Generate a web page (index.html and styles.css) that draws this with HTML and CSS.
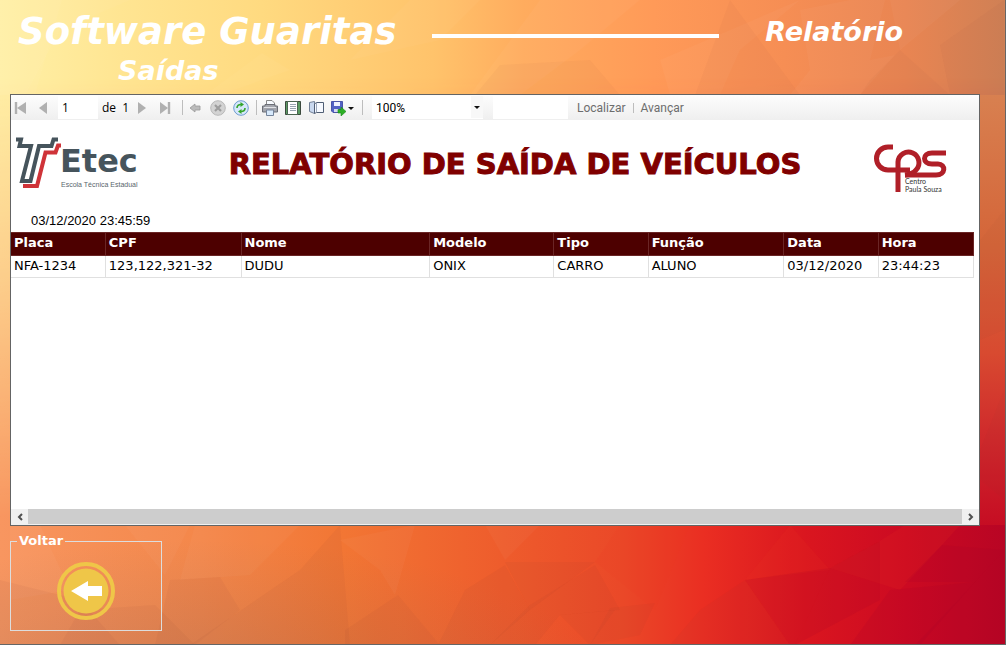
FILE: index.html
```html
<!DOCTYPE html>
<html lang="pt-BR">
<head>
<meta charset="utf-8">
<title>Software Guaritas - Relatório de Saídas</title>
<link rel="stylesheet" href="styles.css">
</head>
<body>
<svg class="backdrop" viewBox="0 0 1006 645" preserveAspectRatio="none" aria-hidden="true">
  <defs>
    <linearGradient id="top"><stop offset="0" stop-color="#fff0a6"/><stop offset=".12" stop-color="#ffe592"/><stop offset=".26" stop-color="#ffda80"/><stop offset=".43" stop-color="#ffc36b"/><stop offset=".52" stop-color="#ffac5e"/><stop offset=".65" stop-color="#ff9a58"/><stop offset=".78" stop-color="#f68e54"/><stop offset=".9" stop-color="#e98552"/><stop offset="1" stop-color="#cf8055"/></linearGradient>
    <linearGradient id="bottom"><stop offset="0" stop-color="#f89660"/><stop offset=".2" stop-color="#f4874a"/><stop offset=".34" stop-color="#f27634"/><stop offset=".5" stop-color="#ee5c2c"/><stop offset=".62" stop-color="#ea4828"/><stop offset=".7" stop-color="#ea2e22"/><stop offset=".8" stop-color="#da161f"/><stop offset=".9" stop-color="#cc0a22"/><stop offset="1" stop-color="#b80524"/></linearGradient>
    <linearGradient id="side" x2="0" y2="1"><stop offset="0" stop-color="#d88050"/><stop offset=".36" stop-color="#d46438"/><stop offset=".6" stop-color="#d84a30"/><stop offset=".78" stop-color="#d02c2c"/><stop offset="1" stop-color="#c60d23"/></linearGradient>
    <linearGradient id="fade" x2="0" y2="1"><stop offset=".12" stop-color="#000"/><stop offset=".45" stop-color="#666"/><stop offset=".8" stop-color="#fff"/></linearGradient>
    <radialGradient id="shade" gradientUnits="userSpaceOnUse" cx="0" cy="0" r="1" gradientTransform="translate(200 700) scale(420 160)"><stop offset="0" stop-color="#8a6a60" stop-opacity=".3"/><stop offset="1" stop-color="#8a6a60" stop-opacity="0"/></radialGradient>
    <mask id="lower"><rect width="1006" height="645" fill="url(#fade)"/></mask>
  </defs>
  <rect width="1006" height="645" fill="url(#top)"/>
  <rect width="1006" height="645" fill="url(#bottom)" mask="url(#lower)"/>
  <rect x="970" y="95" width="36" height="430" fill="url(#side)"/>
  <rect width="1006" height="645" fill="url(#shade)"/>
  <g fill="#fff" fill-opacity=".03">
    <path d="M0 0H62L35 95H0Z"/><path d="M0 0H130L60 30 25 95H0Z"/><path d="M262 53L290 70 220 95H205Z"/><path d="M410 0H480L440 40 350 60Z"/><path d="M540 0H640L580 50 520 95H470Z"/><path d="M660 60L800 0 740 50 720 95H670Z"/><path d="M850 0H885L870 60 895 55 860 95H790L810 70 800 10Z"/><path d="M890 0H960L900 50Z"/>
    <path d="M40 525L70 590 10 600V525Z"/><path d="M125 525H190L165 575Z"/><path d="M195 525H300L250 575 180 580Z"/><path d="M340 540L415 525 395 595 380 570Z"/><path d="M485 525H540L505 560Z"/>
  </g>
  <g fill="#f03a20" fill-opacity=".12">
    <path d="M595 562L620 525H690L655 610Z"/><path d="M745 580L790 525 830 570Z"/><path d="M830 568L880 541 905 525H960L942 545 900 590Z"/>
  </g>
  <g fill="#7c3030" fill-opacity=".035">
    <path d="M475 95L500 65 590 60 620 95Z"/><path d="M695 95L730 0 800 95Z"/><path d="M870 80L900 50 950 95H860Z"/><path d="M940 45L1004 0V95H950Z"/><path d="M980 240L1004 210V330L980 340Z"/><path d="M980 450L1004 390V500L980 480Z"/>
  </g>
  <g fill="#7c3030" fill-opacity=".055">
    <path d="M0 580L80 600 120 645H0Z"/><path d="M80 610L155 605 195 645H60Z"/><path d="M170 580L220 577 240 610 195 645H155Z"/><path d="M300 570L340 525 350 645H190Z"/><path d="M345 630L398 595 440 645H345Z"/><path d="M465 590L505 565 530 610 490 645H438Z"/><path d="M505 562H595L530 610Z"/><path d="M530 605L595 565 620 610 560 615 535 645H490Z"/><path d="M560 615L615 610 590 645Z"/><path d="M610 608L655 603 640 635 590 645Z"/><path d="M700 610L745 580 790 645H670Z"/>
  </g>
  <g fill="#a00028" fill-opacity=".14">
    <path d="M745 580L830 568 795 645H790Z"/><path d="M830 568L880 541 880 600 795 645Z"/><path d="M975 582L1004 550V645H915Z"/><path d="M890 590L975 582 920 645H850Z"/><path d="M942 545L1004 550 975 582H905Z"/>
  </g>
</svg>

<main class="window">
  <header class="header">
    <div class="title-row">
      <h1 class="app-title">Software Guaritas</h1>
      <span class="rule"></span>
      <span class="section">Relatório</span>
    </div>
    <h2 class="subtitle">Saídas</h2>
  </header>

  <section class="viewer">
    <div class="toolbar">
      <button class="tool tool-first" type="button" aria-label="Primeira página"><svg width="18" height="16"><path d="M4 2V14" stroke="#b0b0b0" stroke-width="2.4"/><path d="M14 2V14L5 8Z" fill="#b0b0b0"/></svg></button>
      <button class="tool" type="button" aria-label="Página anterior"><svg width="16" height="16"><path d="M12 2V14L4 8Z" fill="#b0b0b0"/></svg></button>
      <input class="page-input" type="text" value="1" aria-label="Página atual">
      <span class="page-total">de&nbsp; 1</span>
      <button class="tool" type="button" aria-label="Próxima página"><svg width="16" height="16"><path d="M4 2V14L12 8Z" fill="#b0b0b0"/></svg></button>
      <button class="tool" type="button" aria-label="Última página"><svg width="16" height="16"><path d="M3 2V14L11 8Z" fill="#b0b0b0"/><path d="M12 2V14" stroke="#b0b0b0" stroke-width="2.4"/></svg></button>
      <span class="separator separator-first"></span>
      <button class="tool" type="button" aria-label="Voltar ao relatório pai"><svg width="16" height="16"><path d="M3 8L8 4V6H13V10H8V12Z" fill="#bbb" stroke="#999" stroke-width=".8"/></svg></button>
      <button class="tool" type="button" aria-label="Parar"><svg width="16" height="16"><circle cx="8" cy="8" r="7.3" fill="#d3d3d3" stroke="#b9b9b9"/><path d="M5 5L11 11M11 5L5 11" stroke="#9d9d9d" stroke-width="2.2"/></svg></button>
      <button class="tool" type="button" aria-label="Atualizar"><svg width="16" height="16"><circle cx="8" cy="8" r="7.3" fill="#d6e8fb" stroke="#6e9bd0"/><path d="M4 8C4 5.500 5.500 4.500 8 4.500M12 8C12 10.500 10.500 11.500 8 11.500" fill="none" stroke="#35a52c" stroke-width="1.6"/><path d="M7.500 2L11 4.500 7.500 7ZM8.500 9L5 11.500 8.500 14Z" fill="#35a52c"/></svg></button>
      <span class="separator separator-tight"></span>
      <button class="tool" type="button" aria-label="Imprimir"><svg width="16" height="16"><path d="M4.500 .5H10L12.500 3V6H4.500Z" fill="#f8fbff" stroke="#888"/><path d="M.5 6H3V4.500H13V6H15.500V12H.5Z" fill="#a4a6ad" stroke="#6b6e76"/><path d="M2 7.500H14" stroke="#e1e3e8"/><path d="M4.500 10H11.500V15.500H4.500Z" fill="#d7e9fb" stroke="#74839a"/></svg></button>
      <button class="tool" type="button" aria-label="Layout de impressão"><svg width="16" height="16"><path d="M.5 1.500H15.500V14.500H.5Z" fill="#5b9b63" stroke="#3b493d"/><path d="M2.500 1.500H12.500V14.500H2.500Z" fill="#fff" stroke="#4b6550"/><path d="M5 4.500H11M5 6.500H11M5 8.500H11M5 10.500H11" stroke="#98a4b0"/></svg></button>
      <button class="tool" type="button" aria-label="Configurar página"><svg width="16" height="16"><path d="M1.500 2.500L6.500 1.500V13.500L1.500 11.500Z" fill="#c9d8ef" stroke="#728097"/><path d="M6.500 13.500V4L8.500 2.500H15.500V12.500H8.500Z" fill="#f6f9ff" stroke="#505e75"/><path d="M8.500 3V12" stroke="#9ba7bb"/></svg></button>
      <button class="tool tool-save" type="button" aria-label="Exportar"><svg width="24" height="16"><path d="M1.500 1.500H12.500V12.500H3L1.500 11Z" fill="#5262c5" stroke="#4a55a8"/><path d="M4 2H10V6H4Z" fill="#eef2ff"/><path d="M4 9H9V12H4Z" fill="#d5daf0"/><path d="M8 9.500H11V7L16 11.500 11 16V13H8Z" fill="#2caf25" stroke="#178817" stroke-width=".6"/><path d="M18 7H24L21 10Z" fill="#111"/></svg></button>
      <span class="separator separator-last"></span>
      <span class="zoom-box"><select class="zoom" aria-label="Zoom"><option>100%</option></select><svg class="zoom-caret" width="12" height="22" aria-hidden="true"><path d="M3 10H9L6 13Z" fill="#111"/></svg></span>
      <input class="search" type="text" aria-label="Texto a localizar">
      <button class="find" type="button">Localizar</button>
      <span class="separator separator-short"></span>
      <button class="find" type="button">Avançar</button>
    </div>

    <div class="report">
      <div class="report-head">
        <svg class="etec" width="126" height="56" viewBox="0 0 126 56" role="img" aria-label="Etec Escola Técnica Estadual">
          <g fill="none" stroke-width="4"><path d="M0 3.500H5L3.500 10H15L6 45H14.500L23 10H35.500L37.500 3.500H42" stroke="#46545c"/><path d="M45 9.500H42L39.500 16.500H29.500L21 50H7" stroke="#cf3338"/></g>
          <text class="etec-name" x="44" y="36">Etec</text><text class="etec-note" x="45" y="51">Escola Técnica Estadual</text>
        </svg>
        <h3 class="report-title">RELATÓRIO DE SAÍDA DE VEÍCULOS</h3>
        <svg class="cps" width="73" height="51" viewBox="0 0 73 51" role="img" aria-label="Centro Paula Souza">
          <g fill="none" stroke="#b01f28" stroke-width="5"><path d="M19 3H14A11.500 11.500 0 0 0 14 26H36"/><path d="M24 48V18A10.500 10.500 0 1 1 42 26Q39 30 31 31"/><path d="M72 9H58C48 9 48 20 58 20H64C72 20 72 31 62 31H31"/></g>
          <text class="cps-note" x="31" y="40">Centro</text><text class="cps-note" x="31" y="48">Paula Souza</text>
        </svg>
      </div>
      <p class="stamp">03/12/2020 23:45:59</p>
      <table class="records">
        <colgroup><col class="c-short"><col class="c-medium"><col class="c-name"><col class="c-model"><col class="c-short"><col class="c-medium"><col class="c-short"><col></colgroup>
        <thead><tr><th>Placa</th><th>CPF</th><th>Nome</th><th>Modelo</th><th>Tipo</th><th>Função</th><th>Data</th><th>Hora</th></tr></thead>
        <tbody><tr><td>NFA-1234</td><td>123,122,321-32</td><td>DUDU</td><td>ONIX</td><td>CARRO</td><td>ALUNO</td><td>03/12/2020</td><td>23:44:23</td></tr></tbody>
      </table>
    </div>

    <div class="scrollbar">
      <button class="scroll-arrow" type="button" aria-label="Rolar à esquerda"><svg width="8" height="8"><path d="M6 1L3 4 6 7" fill="none" stroke="#505050" stroke-width="2"/></svg></button>
      <span class="thumb"></span>
      <button class="scroll-arrow" type="button" aria-label="Rolar à direita"><svg width="8" height="8"><path d="M2 1L5 4 2 7" fill="none" stroke="#505050" stroke-width="2"/></svg></button>
    </div>
  </section>

  <fieldset class="back-group">
    <legend class="back-legend">Voltar</legend>
    <button class="back" type="button" aria-label="Voltar"><svg width="58" height="58"><circle cx="29" cy="29" r="27" fill="none" stroke="#efc648" stroke-width="4"/><circle cx="29" cy="29" r="22.500" fill="#efc648"/><path d="M14 29L31 19V24H45V34H31V39Z" fill="#fff"/></svg></button>
  </fieldset>
</main>
</body>
</html>
```
FILE: styles.css
```css
* { box-sizing: border-box; }

body {
  margin: 0;
  font-family: "DejaVu Sans", sans-serif;
  color: #000;
}

button {
  padding: 0;
  border: 0;
  background: none;
  font: inherit;
}

.backdrop {
  position: absolute;
  inset: 0;
  z-index: -1;
  width: 100%;
  height: 100%;
}

.window {
  display: flex;
  flex-direction: column;
  min-height: 100vh;
  padding: 0 25px 13px 10px;
  border-right: 1px solid #666;
  border-bottom: 1px solid #666;
}

.header {
  height: 94px;
  padding: 8px 77px 0 8px;
  color: #fff;
  font-style: italic;
}

.title-row {
  display: flex;
  align-items: center;
  height: 48px;
}

.app-title {
  margin: 0;
  font-size: 37px;
  line-height: 48px;
}

.rule {
  flex: 1;
  height: 4px;
  margin: 8px 46px 0 35px;
  background: #fff;
}

.section {
  font-size: 27px;
  font-weight: bold;
  line-height: 32px;
}

.subtitle {
  margin: 0 0 0 100px;
  font-size: 27px;
  line-height: 30px;
}

.viewer {
  display: flex;
  flex: 1;
  flex-direction: column;
  border: 1px solid #646464;
  background: #fff;
}

.toolbar {
  display: flex;
  align-items: center;
  height: 25px;
  background: linear-gradient(#fdfdfd, #efefef);
  font: 12px/16px "Open Sans", sans-serif;
}

.tool {
  display: grid;
  flex: none;
  place-items: center;
  width: 23px;
  height: 22px;
}

.tool-first { width: 20px; }
.tool-save { width: 30px; }

.page-input,
.search,
.zoom {
  height: 23px;
  padding: 0 4px;
  border: 0;
  background: #fff;
  color: #000;
  font: inherit;
}

.page-input {
  width: 40px;
  margin: 0 4px;
}

.page-total {
  width: 28px;
  white-space: nowrap;
}

.separator {
  flex: none;
  width: 1px;
  height: 15px;
  margin: 0 0 0 6px;
  background: #bdbdbd;
}

.separator-tight { margin: 0 1px 0 4px; }

.separator-last { margin-left: 5px; }

.separator-short {
  height: 10px;
  margin: 0 7px;
}

.zoom-box {
  position: relative;
  margin: 0 10px 0 9px;
}

.zoom {
  appearance: none;
  display: block;
  width: 111px;
  font-family: Roboto, sans-serif;
}

.zoom-caret {
  position: absolute;
  top: 0;
  right: 0;
  background: #f8f8f8;
}

.search {
  width: 75px;
  margin-right: 9px;
}

.find {
  color: #6d6d6d;
  font-family: Roboto, sans-serif;
}

.report {
  flex: 1;
  padding: 16px 5px 0 0;
}

.report-head {
  display: flex;
  align-items: flex-start;
  justify-content: space-between;
  padding: 0 27px 0 5px;
}

.report-title {
  margin: 10px 0 0 14px;
  color: #800000;
  font: bold 29px/36px "DejaVu Sans", sans-serif;
  -webkit-text-stroke: 1px #800000;
}

.cps { margin-top: 8px; }

.etec-name {
  fill: #46545c;
  font: bold 32px "DejaVu Sans", sans-serif;
}

.etec-note {
  fill: #59656c;
  font: 7px "Liberation Sans", sans-serif;
}

.cps-note {
  fill: #333;
  font: 7px Lato, sans-serif;
}

.stamp {
  margin: 18px 0 3px 20px;
  font: 13px/16px "Liberation Sans", sans-serif;
}

.records {
  width: 100%;
  border-collapse: collapse;
  table-layout: fixed;
  font-size: 13px;
  line-height: 20px;
}

.records th,
.records td {
  height: 22px;
  padding: 0 2px 0 3px;
  border: 1px solid #e0e0e0;
  border-left-width: 0;
  text-align: left;
  vertical-align: top;
  white-space: nowrap;
}

.records th {
  height: 23px;
  border-color: #6a2525;
  background: #4d0000;
  color: #fff;
}

.c-short { width: 9.8%; }
.c-medium { width: 14.1%; }
.c-name { width: 19.6%; }
.c-model { width: 12.9%; }

.scrollbar {
  display: flex;
  height: 16px;
  border-bottom: 1px solid #f0f0f0;
  background: #f0f0f0;
}

.scroll-arrow {
  display: grid;
  place-items: center;
  width: 17px;
}

.thumb {
  flex: 1;
  background: #cdcdcd;
}

.back-group {
  display: grid;
  justify-items: center;
  width: 152px;
  height: 98px;
  min-width: 0;
  margin: 7px 0 0;
  padding: 13px 0 0;
  border: 1px solid #ddd;
}

.back-legend {
  margin-left: 6px;
  padding: 0 2px;
  color: #fff;
  font-size: 13px;
  font-weight: bold;
  line-height: 16px;
}

.back { height: 58px; }
```
